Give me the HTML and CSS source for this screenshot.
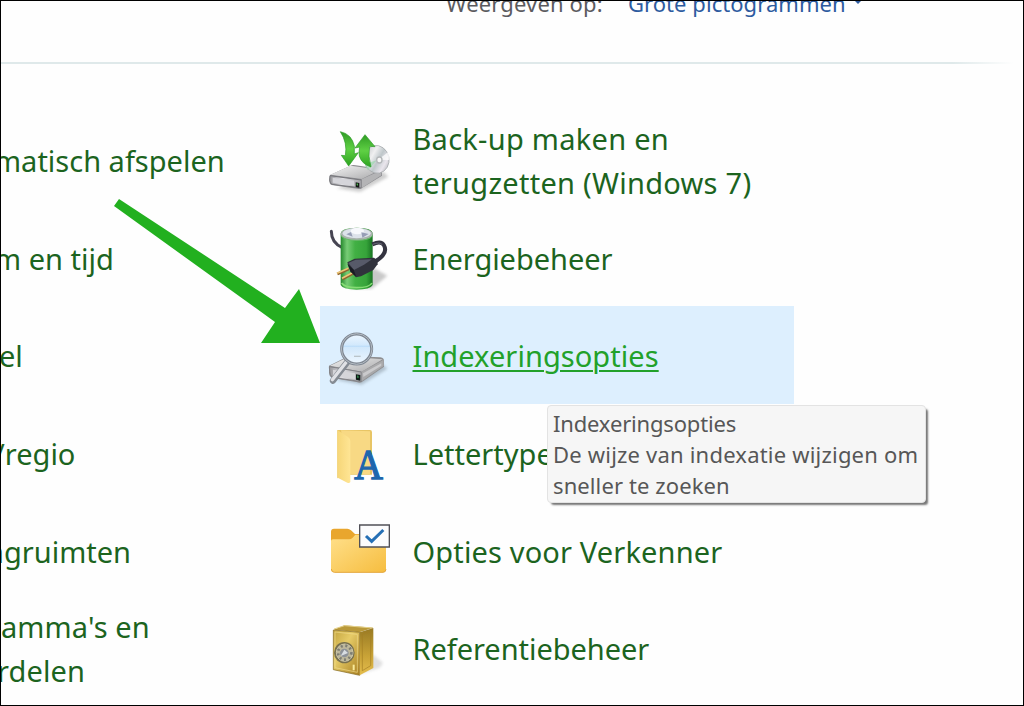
FILE: index.html
```html
<!DOCTYPE html>
<html lang="nl">
<head>
  <meta charset="utf-8">
  <title>Configuratiescherm</title>
  <link rel="stylesheet" href="styles.css">
</head>
<body>
  <div class="window">
    <header class="toolbar">
      <span class="view-label">Weergeven op:</span>
      <a class="view-mode">Grote pictogrammen</a>
      <span class="caret"></span>
    </header>

    <main class="items">
      <div class="column left">
        <div class="item"><a class="autoplay">matisch afspelen</a></div>
        <div class="item"><a class="date">m en tijd</a></div>
        <div class="item"><a class="panel">el</a></div>
        <div class="item"><a class="region">/regio</a></div>
        <div class="item"><a class="storage">ngruimten</a></div>
        <div class="item"><a class="programs">amma's en<br><span class="parts">rdelen</span></a></div>
      </div>

      <div class="column right">
        <div class="item">
          <svg class="icon" viewBox="0 0 240 240">
            <defs>
              <linearGradient id="greenArrow" x1="0" y1="0" x2="0" y2="1">
                <stop offset="0" stop-color="#2f9c24"/>
                <stop offset=".5" stop-color="#5fd044"/>
                <stop offset="1" stop-color="#2ca31f"/>
              </linearGradient>
              <linearGradient id="driveTop" x1="0" y1="0" x2="1" y2="1">
                <stop offset="0" stop-color="#f4f4f4"/>
                <stop offset="1" stop-color="#a9a9ab"/>
              </linearGradient>
              <linearGradient id="driveFront" x1="0" y1="0" x2="1" y2="0">
                <stop offset="0" stop-color="#96969a"/>
                <stop offset=".4" stop-color="#dedee2"/>
                <stop offset="1" stop-color="#a6a6aa"/>
              </linearGradient>
              <linearGradient id="disc" x1="0" y1="0" x2="1" y2="1">
                <stop offset="0" stop-color="#b4b8bb"/>
                <stop offset=".35" stop-color="#f0f0f1"/>
                <stop offset=".55" stop-color="#bfc7ca"/>
                <stop offset=".75" stop-color="#eae6ed"/>
                <stop offset="1" stop-color="#a0a4a8"/>
              </linearGradient>
              <filter id="soft"><feGaussianBlur stdDeviation="5"/></filter>
            </defs>
            <path d="M50 205L120 216L205 170L190 155Z" fill="#777" opacity=".35" filter="url(#soft)"/>
            <path d="M30 165L90 138Q97 134 107 136L178 146Q187 149 186 158V167L126 204Q120 208 112 206L35 195Q28 192 28 182Z" fill="#8d8d91"/>
            <path d="M31 164L92 137L181 149L125 177Z" fill="url(#driveTop)"/>
            <path d="M30 167L124 180V204L36 193Q30 190 29 181Z" fill="url(#driveFront)" stroke="#77777c" stroke-width="3"/>
            <path d="M38 173L102 182V197L38 188Z" fill="#d5d5da"/>
            <path d="M107 187L118 189V203L107 201Z" fill="#151917"/>
            <path d="M110 190L114 191V197L110 195Z" fill="#49b34a"/>
            <path d="M125 178L184 151V166L125 204Z" fill="#b4b4b6"/>
            <ellipse cx="170" cy="118" rx="37" ry="42" transform="rotate(-12 170 118)" fill="url(#disc)" stroke="#a0a4a7" stroke-width="2"/>
            <path d="M174 119L204 97Q209 108 207 120Z" fill="#fff" opacity=".75"/>
            <path d="M170 121L144 151Q137 144 134 132Z" fill="#92d6a7" opacity=".6"/>
            <ellipse cx="178" cy="120" rx="8" ry="9" fill="#f8f8f8" stroke="#b4b7b9" stroke-width="4"/>
            <path d="M61 35Q95 42 103 78V102L115 98L86 138L64 106L76 107Q83 68 61 35Z" fill="url(#greenArrow)" stroke="#2b9a25" stroke-width="2"/>
            <path d="M135 44L165 80L149 79Q143 107 153 141Q125 132 118 108Q116 96 119 81L105 84Z" fill="url(#greenArrow)" stroke="#2b9a25" stroke-width="2"/>
          </svg>
          <a class="backup">Back-up maken en<br><span class="restore">terugzetten (Windows 7)</span></a>
        </div>

        <div class="item">
          <svg class="icon" viewBox="0 -8 240 240">
            <defs>
              <linearGradient id="battery" x1="0" y1="0" x2="1" y2="0">
                <stop offset="0" stop-color="#25882d"/>
                <stop offset=".2" stop-color="#77cc76"/>
                <stop offset=".45" stop-color="#42b044"/>
                <stop offset=".8" stop-color="#36a43a"/>
                <stop offset="1" stop-color="#187322"/>
              </linearGradient>
            </defs>
            <path d="M85 205L155 207L202 168L160 145Z" fill="#666" opacity=".35" filter="url(#soft)"/>
            <path d="M34 35Q34 70 67 84" fill="none" stroke="#464552" stroke-width="9" stroke-linecap="round"/>
            <path d="M62 43Q63 24 111 24Q158 24 158 43V196Q151 210 110 210Q68 210 62 196Z" fill="url(#battery)"/>
            <ellipse cx="110" cy="43" rx="48" ry="19" fill="#a9b3ad"/>
            <ellipse cx="110" cy="41" rx="42" ry="15" fill="#dde2ea"/>
            <ellipse cx="112" cy="34" rx="20" ry="10" fill="#f7f8fc"/>
            <path d="M79 44L93 37L98 51Z M124 38L146 43L127 54Z" fill="#979eb6"/>
            <path d="M63 48Q72 62 111 62Q151 62 157 48" fill="none" stroke="#68ba69" stroke-width="3"/>
            <path d="M65 190Q74 204 110 204Q149 204 156 190" fill="none" stroke="#84dc74" stroke-width="5"/>
            <path d="M157 74Q184 62 192 77Q206 102 162 128" fill="none" stroke="#343440" stroke-width="12"/>
            <path d="M158 74Q179 66 187 75" fill="none" stroke="#696978" stroke-width="3"/>
            <path d="M52 163L86 148M67 178L101 160" stroke="#8e642d" stroke-width="9"/>
            <path d="M51 161L85 146M66 176L100 158" stroke="#edc577" stroke-width="5"/>
            <path d="M82 128L104 117L162 114Q174 120 173 134L160 151L123 170L108 173L91 155Z" fill="#30323c"/>
            <path d="M85 130L107 120L156 119L132 135L102 151Z" fill="#575a69"/>
            <path d="M82 132L101 150L109 172L92 156Z" fill="#191c23"/>
          </svg>
          <a class="power">Energiebeheer</a>
        </div>

        <div class="item selected">
          <svg class="icon" viewBox="0 -15 240 240">
            <defs>
              <linearGradient id="lens" x1="0" y1="0" x2="0" y2="1">
                <stop offset="0" stop-color="#eef7ff"/>
                <stop offset=".38" stop-color="#d1e8fc"/>
                <stop offset=".4" stop-color="#abd4f8"/>
                <stop offset=".43" stop-color="#d0e7fb"/>
                <stop offset="1" stop-color="#eef7ff"/>
              </linearGradient>
            </defs>
            <path d="M50 180L125 194L202 146L175 122Z" fill="#5b6771" opacity=".35" filter="url(#soft)"/>
            <path d="M27 137L86 108L181 112Q194 114 192 126V140L129 184Q121 191 110 186L36 174Q27 168 27 158Z" fill="#8e8e90"/>
            <path d="M30 137L87 110L188 118L125 155Z" fill="url(#driveTop)"/>
            <path d="M28 140L124 156V185L37 172Q29 165 29 155Z" fill="url(#driveFront)" stroke="#828287" stroke-width="3"/>
            <path d="M39 149L105 160V178L39 166Z" fill="#d5d5d9"/>
            <path d="M108 163L121 165V182L108 179Z" fill="#101b18"/>
            <path d="M111 166L116 168V174L111 173Z" fill="#317f48"/>
            <path d="M125 155L191 119V138L125 184Z" fill="#a9a9ab"/>
            <path d="M129 160L184 130V137L130 171Z" fill="#cacacc"/>
            <path d="M82 126L39 182" stroke="#858b93" stroke-width="19" stroke-linecap="round"/>
            <path d="M79 126L37 179" stroke="#e0e1e5" stroke-width="10" stroke-linecap="round"/>
            <circle cx="110" cy="87" r="45" fill="url(#lens)" stroke="#7f8792" stroke-width="9"/>
            <circle cx="110" cy="87" r="46" fill="none" stroke="#b4bcc4" stroke-width="3"/>
            <path d="M102 109H122" stroke="#bac4ca" stroke-width="4"/>
          </svg>
          <a class="indexing">Indexeringsopties</a>
        </div>

        <div class="item">
          <svg class="icon" viewBox="0 -22 240 240">
            <defs>
              <linearGradient id="folderFlap" x1="0" y1="0" x2="1" y2="0">
                <stop offset="0" stop-color="#f6d678"/>
                <stop offset="1" stop-color="#ffe594"/>
              </linearGradient>
            </defs>
            <path d="M52 29H150Q156 29 156 36V163H87L52 174Z" fill="#e8c565"/>
            <path d="M63 30L150 33V162H88Z" fill="#f8d984"/>
            <path d="M52 29L84 50Q91 54 91 62V185Q88 190 82 187L56 174Q52 172 52 167Z" fill="url(#folderFlap)"/>
            <text class="font-letter" x="103" y="176" textLength="86" lengthAdjust="spacingAndGlyphs">A</text>
          </svg>
          <a class="fonts">Lettertypen</a>
        </div>

        <div class="item">
          <svg class="icon" viewBox="0 -14 240 240">
            <defs>
              <linearGradient id="folderFront" x1="0" y1="0" x2="1" y2="1">
                <stop offset="0" stop-color="#ffe08b"/>
                <stop offset="1" stop-color="#f6bd3f"/>
              </linearGradient>
            </defs>
            <path d="M33 51Q33 42 42 42H82Q88 42 93 47L105 58H192Q198 58 198 65V130H33Z" fill="#e9a62d"/>
            <path d="M33 79Q33 74 39 74H87Q93 74 98 69L106 60H190Q198 60 198 69V164Q198 173 189 173H43Q33 173 33 163Z" fill="url(#folderFront)"/>
            <path d="M34 163Q35 173 43 173H189Q197 173 198 164" fill="none" stroke="#e4a63c" stroke-width="3"/>
            <path d="M119 31H208V97H119Z" fill="#fcfcfd" stroke="#505057" stroke-width="4"/>
            <path d="M138 64L155 80L190 46" fill="none" stroke="#256fb5" stroke-width="9"/>
          </svg>
          <a class="explorer">Opties voor Verkenner</a>
        </div>

        <div class="item">
          <svg class="icon" viewBox="0 -22 240 240">
            <defs>
              <linearGradient id="safeFront" x1="0" y1="0" x2="1" y2="1">
                <stop offset="0" stop-color="#c3a43e"/>
                <stop offset=".4" stop-color="#e6cb67"/>
                <stop offset="1" stop-color="#a77e20"/>
              </linearGradient>
              <linearGradient id="safeSide" x1="0" y1="0" x2="0" y2="1">
                <stop offset="0" stop-color="#987a24"/>
                <stop offset=".6" stop-color="#c9a337"/>
                <stop offset="1" stop-color="#e5bd4d"/>
              </linearGradient>
            </defs>
            <path d="M110 178L178 158L189 143L160 118Z" fill="#666" opacity=".2" filter="url(#soft)"/>
            <path d="M41 43L73 30L160 37L118 51Z" fill="#b9993a"/>
            <path d="M42 41L74 31L158 38" fill="none" stroke="#e5d18a" stroke-width="3"/>
            <path d="M40 44L119 51V180L40 163Z" fill="url(#safeFront)" stroke="#80651d" stroke-width="2"/>
            <path d="M119 51L160 38V158L119 180Z" fill="url(#safeSide)"/>
            <path d="M127 57L152 49V151L127 166Z" fill="none" stroke="#a57e22" stroke-width="2"/>
            <path d="M45 50L112 57V171L45 157Z" fill="none" stroke="#f0db8c" stroke-width="2"/>
            <ellipse cx="73" cy="112" rx="31" ry="32" fill="#77704f"/>
            <ellipse cx="74" cy="112" rx="25" ry="26" fill="#bdb79b" stroke="#cfc9ad" stroke-width="3"/>
            <ellipse cx="74" cy="112" rx="20" ry="21" fill="none" stroke="#7d7d73" stroke-width="8" stroke-dasharray="6 8"/>
            <ellipse cx="73" cy="113" rx="13" ry="13" fill="#8d9299"/>
            <path d="M62 122L73 103L84 113Z" fill="#d8dde2"/>
            <path d="M101 148V165" stroke="#f8e99b" stroke-width="6"/>
          </svg>
          <a class="credentials">Referentiebeheer</a>
        </div>
      </div>
    </main>

    <svg class="pointer" viewBox="0 0 208 146">
      <path d="M6 0L172 109L186 90L207 144H148L162 123L1 7Z" fill="#22b01f"/>
    </svg>

    <div class="tooltip">
      <div class="tip-title">Indexeringsopties</div>
      <div class="tip-text">De wijze van indexatie wijzigen om</div>
      <div class="tip-end">sneller te zoeken</div>
    </div>
  </div>
</body>
</html>
```
FILE: styles.css
```css
* {
  box-sizing: border-box;
}

body {
  margin: 0;
  background: #fefefe;
  font-family: "Noto Sans", "Open Sans", sans-serif;
}

.window {
  position: relative;
  width: 1024px;
  height: 706px;
  border: 1px solid #000;
  overflow: hidden;
}

/* Top bar */
.toolbar {
  display: flex;
  align-items: flex-start;
  height: 63px;
  padding-left: 445px;
  border-bottom: 2px solid;
  border-image: linear-gradient(to right, #dfe9ea 0%, #dfe9ea 93%, #fefefe 99%) 1;
  font-size: 22px;
  line-height: 30px;
  white-space: nowrap;
}

.view-label, .view-mode {
  margin-top: -13px;
}

.view-label {
  width: 182px;
  color: #5b5b5f;
  letter-spacing: 0.15px;
}

.view-mode {
  width: 227px;
  color: #2d5ba0;
  letter-spacing: 0.05px;
}

.caret {
  border: 3px solid transparent;
  border-top: 3px solid #2d5ba0;
}

/* Items */
.items {
  display: grid;
  grid-template-columns: 319px 474px;
  padding-top: 47px;
}

.column {
  display: grid;
  grid-template-rows: repeat(6, 97.6px);
}

.left {
  overflow: hidden;
}

.item {
  display: flex;
  align-items: center;
  color: #1c641e;
  font-size: 29px;
  line-height: 44px;
  white-space: nowrap;
}

.item a {
  position: relative;
  top: 1.5px;
}

/* the left column runs off the edge of the window */
.autoplay, .date {
  margin-left: -7px;
}

.panel {
  margin-left: -2px;
}

.region {
  margin-left: -7px;
}

.storage {
  margin-left: -15px;
}

.programs {
  letter-spacing: 0.1px;
}

.parts {
  margin-left: -4px;
}

.backup, .restore {
  letter-spacing: 0.27px;
}

.indexing {
  letter-spacing: 0.06px;
}

.explorer {
  letter-spacing: 0.15px;
}

.power, .credentials {
  letter-spacing: -0.05px;
}

.icon {
  flex: none;
  width: 80px;
  height: 80px;
  margin-right: 12.5px;
}

.selected {
  background: #ddeffe;
}

.selected a {
  color: #22a12a;
  text-decoration: underline;
  text-decoration-thickness: 2px;
  text-underline-offset: 3px;
}

.font-letter {
  fill: #1e66ad;
  stroke: #1e66ad;
  stroke-width: 4px;
  font-family: "Liberation Serif", serif;
  font-size: 128px;
}

/* Green arrow */
.pointer {
  position: absolute;
  left: 112px;
  top: 198px;
  width: 208px;
  height: 146px;
}

.tooltip {
  position: absolute;
  left: 546px;
  top: 404px;
  width: 379px;
  height: 98px;
  padding: 2px 5px;
  border: 1px solid #e3e3e3;
  border-radius: 4px;
  background: #f6f6f6;
  box-shadow: 3px 3px 2px -1px #777;
  color: #575757;
  font-size: 22px;
  line-height: 31px;
  white-space: nowrap;
}

.tip-title {
  letter-spacing: -0.17px;
}

.tip-text {
  letter-spacing: 0.2px;
}

.tip-end {
  letter-spacing: 0.1px;
}
```
